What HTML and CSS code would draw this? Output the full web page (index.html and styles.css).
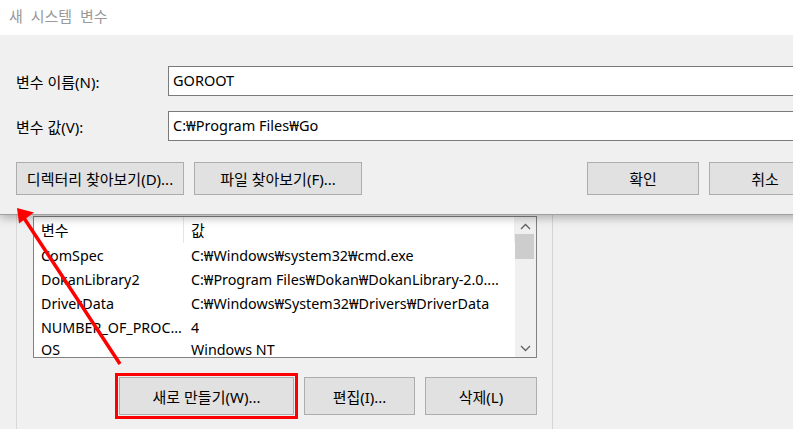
FILE: index.html
```html
<!DOCTYPE html>
<html lang="ko">
<head>
<meta charset="utf-8">
<title>새 시스템 변수</title>
<link rel="stylesheet" href="styles.css">
</head>
<body>
<div class="window">
  <div class="group">
    <div class="listbox">
      <div class="list">
        <div class="row head"><span class="c1">변수</span><span class="c2">값</span></div>
        <div class="row"><span class="c1">ComSpec</span><span class="c2">C:₩Windows₩system32₩cmd.exe</span></div>
        <div class="row"><span class="c1">DokanLibrary2</span><span class="c2">C:₩Program Files₩Dokan₩DokanLibrary-2.0....</span></div>
        <div class="row"><span class="c1">DriverData</span><span class="c2">C:₩Windows₩System32₩Drivers₩DriverData</span></div>
        <div class="row"><span class="c1">NUMBER_OF_PROC...</span><span class="c2">4</span></div>
        <div class="row last"><span class="c1">OS</span><span class="c2">Windows NT</span></div>
      </div>
      <div class="scrollbar">
        <svg class="chev" width="11" height="7" viewBox="0 0 11 7"><path d="M1 6 L5.5 1.5 L10 6" fill="none" stroke="#606060" stroke-width="1.3"/></svg>
        <div class="thumb"></div>
        <div class="track"></div>
        <svg class="chev" width="11" height="7" viewBox="0 0 11 7"><path d="M1 1 L5.5 5.5 L10 1" fill="none" stroke="#606060" stroke-width="1.3"/></svg>
      </div>
    </div>
    <div class="actions">
      <button class="btn btn-new highlight">새로 만들기(W)...</button>
      <button class="btn btn-edit">편집(I)...</button>
      <button class="btn btn-del">삭제(L)</button>
    </div>
  </div>
</div>

<div class="dialog">
  <div class="titlebar">새 시스템 변수</div>
  <div class="dialog-body">
    <div class="field">
      <label class="label">변수 이름(N):</label>
      <div class="input">GOROOT</div>
    </div>
    <div class="field">
      <label class="label">변수 값(V):</label>
      <div class="input">C:₩Program Files₩Go</div>
    </div>
    <div class="dialog-buttons">
      <button class="btn dbtn-wide">디렉터리 찾아보기(D)...</button>
      <button class="btn dbtn-wide">파일 찾아보기(F)...</button>
      <button class="btn dbtn ok">확인</button>
      <button class="btn dbtn">취소</button>
    </div>
  </div>
</div>

<svg class="arrow" width="793" height="429" viewBox="0 0 793 429">
  <line x1="120" y1="364" x2="24" y2="218" stroke="#ff0000" stroke-width="3.5"/>
  <polygon points="17,208 34,212.5 19,223.5" fill="#ff0000"/>
</svg>
</body>
</html>
```

FILE: styles.css
```css
* { box-sizing: border-box; }
html, body {
  margin: 0;
  padding: 0;
}
body {
  width: 793px;
  height: 429px;
  overflow: hidden;
  position: relative;
  background: #f0f0f0;
  font-family: "Noto Sans", "Noto Sans CJK KR", sans-serif;
  font-size: 15px;
  color: #000;
}

/* background window */
.window {
  height: 429px;
  padding-left: 16px;
  overflow: hidden;
}
.group {
  width: 537px;
  height: 429px;
  border-left: 1px solid #d9d9d9;
  border-right: 1px solid #d4d4d4;
  padding-top: 216px;
  padding-left: 16px;
}
.listbox {
  width: 504px;
  height: 142px;
  border: 1px solid #828282;
  background: #fff;
  display: flex;
}
.list {
  flex: 1;
  min-width: 0;
}
.row {
  display: flex;
  height: 24px;
  align-items: center;
  white-space: nowrap;
  font-size: 14.3px;
}
.row.head {
  height: 26px;
  font-size: 15px;
}
.row.last {
  height: 18px;
  align-items: flex-start;
  padding-top: 4px;
  line-height: 14px;
}
.c1 {
  width: 150px;
  padding-left: 7px;
  overflow: hidden;
  flex: none;
}
.c2 {
  padding-left: 7px;
  overflow: hidden;
}
.last .c1,
.last .c2 {
  overflow: visible;
}
.head .c1 {
  height: 26px;
  line-height: 26px;
  border-right: 1px solid #e5e5e5;
}
.head .c2 {
  flex: 1;
  height: 26px;
  line-height: 26px;
  border-right: 1px solid #eeeeee;
}
.scrollbar {
  width: 21px;
  flex: none;
  background: #f0f0f0;
  display: flex;
  flex-direction: column;
  align-items: center;
  padding-top: 6px;
}
.chev { display: block; flex: none; }
.thumb {
  width: 19px;
  height: 25px;
  margin-top: 4px;
  margin-left: -2px;
  background: #cdcdcd;
  flex: none;
}
.track { flex: 1; }
.scrollbar .chev:last-child { margin-bottom: 5px; }

.actions {
  width: 504px;
  margin-top: 19px;
  display: flex;
  justify-content: flex-end;
  gap: 10px;
}

.btn {
  font-family: inherit;
  font-size: 15px;
  color: #000;
  background: #e1e1e1;
  border: 1px solid #adadad;
  padding: 0;
  margin: 0;
  white-space: nowrap;
}
.btn-new { width: 175px; height: 38px; }
.btn-edit { width: 111px; height: 38px; }
.btn-del { width: 112px; height: 38px; }
.highlight {
  outline: 3px solid #ff0000;
  outline-offset: 1px;
}

/* overlay dialog */
.dialog {
  position: absolute;
  top: 0;
  left: 0;
  width: 837px;
  height: 215px;
  background: #f0f0f0;
  border-bottom: 1px solid #a0a0a0;
  box-shadow: 0 3px 9px rgba(0, 0, 0, 0.28);
}
.titlebar {
  height: 35px;
  background: #fff;
  color: #9a9a9a;
  padding-left: 9px;
  line-height: 33px;
  word-spacing: 4px;
}
.dialog-body {
  padding: 31px 16px 0 16px;
}
.field {
  display: flex;
  align-items: center;
  margin-bottom: 15px;
}
.label {
  width: 152px;
  flex: none;
}
.input {
  flex: 1;
  height: 30px;
  border: 1px solid #7a7a7a;
  background: #fff;
  padding-left: 4px;
  line-height: 27px;
  white-space: nowrap;
  font-size: 14.5px;
}
.dialog-buttons {
  display: flex;
  gap: 10px;
  margin-top: 21px;
}
.dbtn-wide { width: 168px; height: 33px; }
.dbtn { width: 112px; height: 33px; }
.ok { margin-left: auto; }

.arrow {
  position: absolute;
  top: 0;
  left: 0;
  pointer-events: none;
}
```
